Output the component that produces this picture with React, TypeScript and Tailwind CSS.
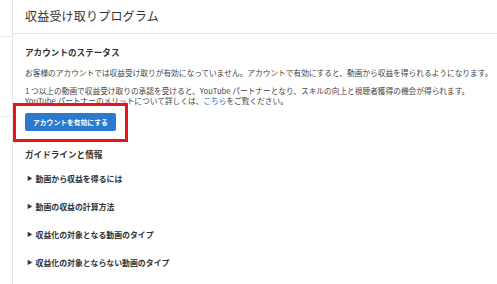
import React from 'react';

const guides = [
  '動画から収益を得るには',
  '動画の収益の計算方法',
  '収益化の対象となる動画のタイプ',
  '収益化の対象とならない動画のタイプ',
];

const App: React.FC = () => {
  return (
    <div
      className="flex h-[284px] w-[497px] overflow-hidden bg-white text-[#333]"
      style={{ fontFamily: '"Noto Sans CJK JP", "Liberation Sans", sans-serif' }}
    >
      {/* Left rail */}
      <div className="flex w-[13px] shrink-0 flex-col border-r border-[#e6e6e6]">
        <div className="h-[37px] border-b border-[#ececec]" />
        <div className="h-[80px] border-b border-[#ececec]" />
      </div>

      {/* Main */}
      <div className="flex min-w-0 flex-1 flex-col">
        <div className="flex h-[34px] items-center border-b border-[#e8e8e8] pb-[2px] pl-[12px]">
          <h1 className="text-[12px] leading-none font-normal tracking-[0.2px] text-[#333]">
            収益受け取りプログラム
          </h1>
        </div>

        <div className="flex flex-col pl-[12px] pt-[13px]">
          <h2 className="text-[8.6px] leading-[10px] font-bold text-[#333]">アカウントのステータス</h2>
          <p className="mt-[11px] text-[7.7px] leading-[10px] text-[#444]">
            お客様のアカウントでは収益受け取りが有効になっていません。アカウントで有効にすると、動画から収益を得られるようになります。
          </p>
          <p className="mt-[8px] text-[7.7px] leading-[10px] text-[#444]">
            1 つ以上の動画で収益受け取りの承認を受けると、YouTube パートナーとなり、スキルの向上と視聴者獲得の機会が得られます。
            <br />
            YouTube パートナーのメリットについて詳しくは、<span className="text-[#167ac6]">こちら</span>をご覧ください。
          </p>

          <div className="relative mt-[7px] self-start">
            <button className="flex h-[18px] items-center rounded-[2px] bg-[#2a7bd0] px-[8px] text-[6.8px] font-bold text-white">
              アカウントを有効にする
            </button>
            <div className="pointer-events-none absolute -top-[10px] -bottom-[11px] -left-[12px] -right-[12px] border-[3px] border-[#e8141a]" />
          </div>

          <h2 className="mt-[18px] text-[8.6px] leading-[10px] font-bold text-[#333]">ガイドラインと情報</h2>

          <ul className="mt-[15px] flex flex-col gap-[18px]">
            {guides.map((g) => (
              <li key={g} className="flex h-[10px] items-center text-[7.9px] font-bold text-[#333]">
                <span className="ml-[2px] mr-[3px] text-[5.5px] leading-none">▶</span>
                {g}
              </li>
            ))}
          </ul>
        </div>
      </div>
    </div>
  );
};

export default App;
